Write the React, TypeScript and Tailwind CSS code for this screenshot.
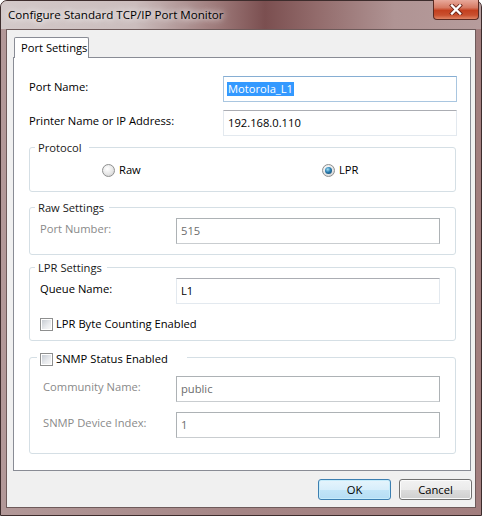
import React from 'react';

type BoxKind = 'focus' | 'normal' | 'disabled';

const TextBox: React.FC<{ value: string; kind?: BoxKind; selected?: boolean; className?: string }> = ({
  value,
  kind = 'normal',
  selected = false,
  className = '',
}) => {
  const border =
    kind === 'focus'
      ? 'border-[#a9c6e0] border-t-[#86aed3]'
      : kind === 'disabled'
        ? 'border-[#adb2b5] border-b-[#c9cdd0]'
        : 'border-[#e3e9ef] border-t-[#abadb3]';
  return (
    <div className={`flex h-[26px] items-center border bg-white ${border} ${className}`}>
      {selected ? (
        <span className="ml-[3px] bg-[#3399ff] px-px leading-[14px] text-white">{value}</span>
      ) : (
        <span className={`ml-[4px] ${kind === 'disabled' ? 'text-[#6d6d6d]' : 'text-black'}`}>{value}</span>
      )}
    </div>
  );
};

const Radio: React.FC<{ checked?: boolean }> = ({ checked = false }) => (
  <span className="flex h-[13px] w-[13px] items-center justify-center rounded-full border border-[#8e8f8f] bg-[radial-gradient(circle_at_40%_35%,#ffffff,#e6e6e6_55%,#c9c9c9)]">
    {checked && (
      <span className="h-[7px] w-[7px] rounded-full bg-[radial-gradient(circle_at_40%_35%,#a6e3f7,#2a7db0_45%,#0f3e5f)]" />
    )}
  </span>
);

const Check: React.FC = () => (
  <span className="flex h-[13px] w-[13px] items-center justify-center border border-[#8e8f8f] bg-white">
    <span className="h-[9px] w-[9px] bg-[linear-gradient(135deg,#c7ccd3,#e9ebee_60%,#f7f7f7)]" />
  </span>
);

const GroupBox: React.FC<{ legend: React.ReactNode; className?: string; legendClass?: string; children?: React.ReactNode }> = ({
  legend,
  className = '',
  legendClass = '',
  children,
}) => (
  <div className={`w-[427px] rounded-[3px] border border-[#d5dfe5] ${className}`}>
    <div className={`flex h-[16px] w-fit items-center whitespace-nowrap bg-white text-[#1a1a1a] ${legendClass}`}>{legend}</div>
    {children}
  </div>
);

const Button: React.FC<{ label: string; primary?: boolean }> = ({ label, primary = false }) => (
  <button
    className={`flex h-[21px] w-[73px] items-center justify-center rounded-[3px] border text-black ${
      primary
        ? 'border-[#3c7fb1] bg-[linear-gradient(#e5f4fc,#d7eefb_50%,#c2e5f8_50%,#b5ddf4)] shadow-[inset_0_0_0_1px_#c6ecfb]'
        : 'border-[#707070] bg-[linear-gradient(#f2f2f2,#ebebeb_50%,#dddddd_50%,#cfcfcf)] shadow-[inset_0_0_0_1px_#fbfbfb]'
    }`}
  >
    {label}
  </button>
);

export default function App() {
  return (
    <div className="h-[516px] w-[482px] overflow-hidden bg-white font-['Segoe_UI','Open_Sans',sans-serif] text-[11.2px] leading-[16px]">
      <div className="relative flex h-[516px] w-[482px] flex-col rounded-t-[7px] border border-[#3d2c2c] bg-[linear-gradient(to_right,#b29898,#a58585_50%,#a27e7e)]">
        {/* title bar */}
        <div className="flex h-[28px] items-center rounded-t-[6px] bg-[linear-gradient(to_right,#d3c9c9,#cbbdbd_28%,#9e7a7a_45%,#7b4f50_55%,#936c6c_66%,#b09494_82%,#b69c9c)] pl-[7px]">
          <span className="whitespace-nowrap text-[11.6px] text-black [text-shadow:0_0_6px_#ffffff,0_0_10px_#ffffff]">
            Configure Standard TCP/IP Port Monitor
          </span>
        </div>

        {/* close button */}
        <div className="absolute right-[2px] top-[-1px] flex h-[20px] w-[46px] items-center justify-center rounded-b-[4px] border border-t-0 border-[#5b2a22] bg-[linear-gradient(#e8a99b,#d67a63_40%,#c4401f_55%,#c9502f_80%,#e08565)]">
          <svg width="14" height="11" viewBox="0 0 14 11">
            <path d="M3 1.5 L11 9.5 M11 1.5 L3 9.5" stroke="#6b2418" strokeWidth="4" strokeLinecap="square" />
            <path d="M3 1.5 L11 9.5 M11 1.5 L3 9.5" stroke="#ffffff" strokeWidth="2.4" strokeLinecap="square" />
          </svg>
        </div>

        {/* client area */}
        <div className="ml-[5px] flex h-[479px] w-[470px] flex-col border border-[#6e5a5a] bg-[#f0f0f0] pt-[7px]">
          <div className="pl-[7px]">
            <div className="relative z-10 -mb-px h-[21px] w-[75px] whitespace-nowrap rounded-t-[2px] border border-b-0 border-[#898c95] bg-white pl-[6px] leading-[20px] text-black">
              Port Settings
            </div>
          </div>

          <div className="ml-[6px] flex h-[414px] w-[458px] flex-col border border-[#898c95] bg-white pl-[15px] text-black">
            <div className="mt-[18px] flex h-[26px] items-center">
              <span className="mb-[4px] w-[194px]">Port Name:</span>
              <TextBox value="Motorola_L1" kind="focus" selected className="w-[234px]" />
            </div>
            <div className="mt-[8px] flex h-[26px] items-center">
              <span className="mb-[4px] w-[194px]">Printer Name or IP Address:</span>
              <TextBox value="192.168.0.110" className="w-[234px]" />
            </div>

            <GroupBox legend="Protocol" className="mt-[11px] h-[45px]" legendClass="-mt-[8px] ml-[5px] pl-[3px] pr-[7px]">
              <div className="mt-[6px] flex h-[16px] items-center pl-[72px]">
                <div className="flex w-[220px] items-center gap-[4px]">
                  <Radio />
                  <span>Raw</span>
                </div>
                <div className="flex items-center gap-[4px]">
                  <Radio checked />
                  <span>LPR</span>
                </div>
              </div>
            </GroupBox>

            <GroupBox legend="Raw Settings" className="mt-[15px] h-[48px]" legendClass="-mt-[8px] ml-[5px] pl-[3px] pr-[5px]">
              <div className="mt-[2px] flex h-[26px] items-center pl-[10px]">
                <span className="mb-[4px] w-[136px] text-[#8a8a8a]">Port Number:</span>
                <TextBox value="515" kind="disabled" className="w-[264px]" />
              </div>
            </GroupBox>

            <GroupBox legend="LPR Settings" className="mt-[12px] h-[74px]" legendClass="-mt-[8px] ml-[5px] pl-[3px] pr-[5px]">
              <div className="mt-[2px] flex h-[26px] items-center pl-[10px]">
                <span className="mb-[4px] w-[136px]">Queue Name:</span>
                <TextBox value="L1" className="w-[264px]" />
              </div>
              <div className="mt-[12px] flex h-[16px] items-center gap-[3px] pl-[10px]">
                <Check />
                <span>LPR Byte Counting Enabled</span>
              </div>
            </GroupBox>

            <GroupBox
              legend={
                <>
                  <Check />
                  <span className="ml-[3px] text-black">SNMP Status Enabled</span>
                </>
              }
              className="mt-[16px] h-[97px]"
              legendClass="-mt-[7px] ml-[7px] pl-[3px] pr-[19px]"
            >
              <div className="mt-[9px] flex h-[26px] items-center pl-[13px]">
                <span className="mb-[4px] w-[133px] text-[#8a8a8a]">Community Name:</span>
                <TextBox value="public" kind="disabled" className="w-[264px]" />
              </div>
              <div className="mt-[10px] flex h-[26px] items-center pl-[13px]">
                <span className="mb-[4px] w-[133px] text-[#8a8a8a]">SNMP Device Index:</span>
                <TextBox value="1" kind="disabled" className="w-[264px]" />
              </div>
            </GroupBox>
          </div>

          <div className="mt-[8px] flex justify-end gap-[8px] pr-[3px]">
            <Button label="OK" primary />
            <Button label="Cancel" />
          </div>
        </div>
      </div>
    </div>
  );
}
